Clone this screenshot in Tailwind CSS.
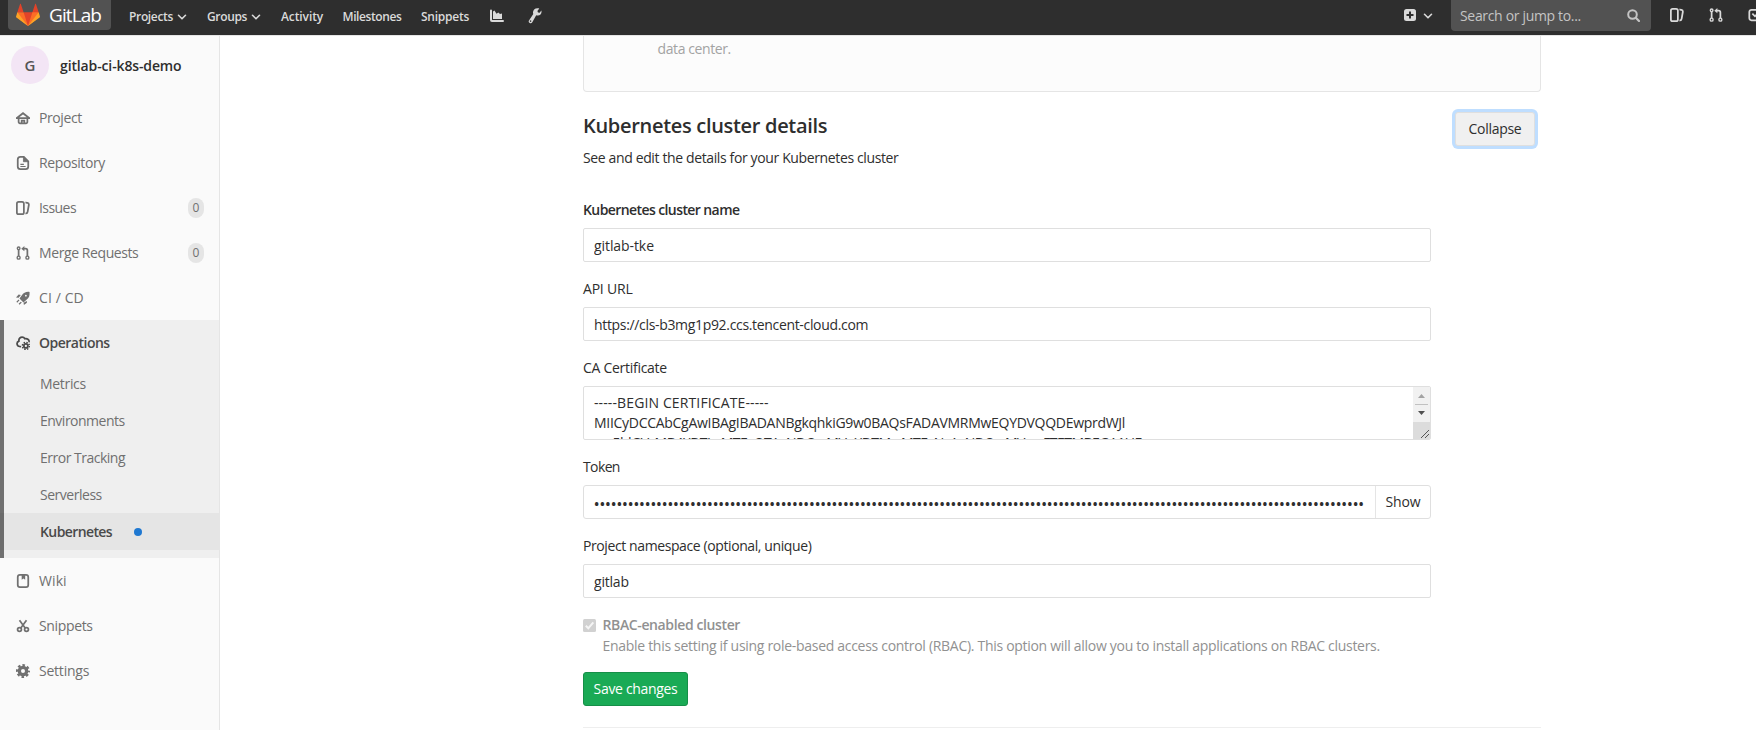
<!DOCTYPE html>
<html lang="en">
<head>
<meta charset="utf-8">
<title>Kubernetes cluster · gitlab-ci-k8s-demo · GitLab</title>
<script src="https://cdn.jsdelivr.net/npm/@tailwindcss/browser@4"></script>
</head>
<body class="flex h-[730px] w-[1756px] flex-col overflow-hidden bg-white font-['Open_Sans','Noto_Sans',sans-serif] text-sm leading-5 text-[#2e2e2e]">

<svg class="hidden">
  <symbol id="i-issues" viewBox="0 0 16 16"><path d="M10.458 15.012l.311.055a3 3 0 0 0 3.476-2.433l1.389-7.879A3 3 0 0 0 13.2 1.28L11.23.933a3.002 3.002 0 0 0-.824-.031c.364.59.58 1.28.593 2.02l1.854.328a1 1 0 0 1 .811 1.158l-1.389 7.879a1 1 0 0 1-1.158.81l-.118-.02a3.98 3.98 0 0 1-.541 1.935zM3 0h4a3 3 0 0 1 3 3v10a3 3 0 0 1-3 3H3a3 3 0 0 1-3-3V3a3 3 0 0 1 3-3zm0 2a1 1 0 0 0-1 1v10a1 1 0 0 0 1 1h4a1 1 0 0 0 1-1V3a1 1 0 0 0-1-1H3z"/></symbol>
  <symbol id="i-merge" viewBox="0 0 16 16"><g fill="none" stroke="currentColor"><g stroke-width="1.6"><circle cx="3" cy="2.7" r="1.5"/><circle cx="3" cy="13.3" r="1.7"/><circle cx="13" cy="13.3" r="1.7"/></g><path stroke-width="2" d="M3 4.5v7M13 11.5V5a2 2 0 0 0-2-2H8.5"/></g><path d="M9.6 0v6L6 3z"/></symbol>
  <symbol id="i-caret" viewBox="0 0 10 10"><path d="M1.500 3.300L5 6.800l3.500-3.500" fill="none" stroke="currentColor" stroke-width="1.6" stroke-linecap="round" stroke-linejoin="round"/></symbol>
</svg>

<header class="flex h-[35px] shrink-0 overflow-hidden bg-[#2e2e2e] text-[#dadada]">
  <a class="ml-2 flex h-[30px] w-[103px] shrink-0 items-center rounded-b bg-[#525252] pl-2 text-white">
    <svg class="h-6 w-6" viewBox="0 0 36 36"><path fill="#e24329" d="M2 14l9.38 9v-9l-4-12.28c-.205-.632-1.176-.632-1.38 0zM34 14l-9.38 9v-9l4-12.28c.205-.632 1.176-.632 1.38 0zM18 34.38L3 14h30z"/><path fill="#fc6d26" d="M18 34.38L11.38 14H2l4 11zM18 34.38L24.62 14H34l-4 11z"/><path fill="#fca326" d="M2 14L.1 20.16c-.18.565 0 1.2.5 1.56L18 34.38zM34 14l1.9 6.16c.18.565 0 1.2-.5 1.56L18 34.38z"/></svg>
    <span class="ml-[9px] text-[19px] tracking-[-0.91px]">GitLab</span>
  </a>
  <nav class="flex h-[33px] items-center text-xs font-semibold">
    <a class="ml-[18px] flex w-[78px] items-center"><span class="w-12 tracking-[-0.34px]">Projects</span><svg class="h-[10px] w-[10px]"><use href="#i-caret"/></svg></a>
    <a class="flex w-[74px] items-center"><span class="w-11 tracking-[-0.36px]">Groups</span><svg class="h-[10px] w-[10px]"><use href="#i-caret"/></svg></a>
    <a class="w-[61.5px] tracking-[-0.1px]">Activity</a>
    <a class="w-[78.5px] tracking-[-0.4px]">Milestones</a>
    <a class="w-[68.5px] tracking-[-0.25px]">Snippets</a>
    <svg class="-mt-0.5 h-[14px] w-[14px]" fill="currentColor" viewBox="0 0 14 14"><path d="M0 1.500a1 1 0 0 1 2 0V10.500q0 .5.5.5H13a1 1 0 0 1 0 2H2a2 2 0 0 1-2-2zM3 2.500l1.500-1L6.500 4.800 8.300 3.600l1.700 1.500L12 4.500V10H3z"/></svg>
    <svg class="-mt-0.5 ml-6 h-4 w-[14px]" fill="currentColor" viewBox="0 0 14 16"><path d="M11.300.4L9.400 3l.6 1.600 1.700.2 1.600-2.400c.9 2.700-.8 5.200-3.400 5.200-.7 0-1.200-.1-1.700-.3L4.300 14.300A1.900 1.900 0 1 1 1 12.400L5.300 6C4 3.200 6.500-.8 11.300.4zM3.300 12.700a.8.8 0 1 0-1.300.9.8.8 0 0 0 1.300-.9z"/></svg>
  </nav>
  <div class="ml-auto flex h-8 w-[352px] shrink-0 items-center">
    <svg class="-mt-0.5 h-3 w-3 shrink-0" viewBox="0 0 12 12"><rect width="12" height="12" rx="2.500" fill="currentColor"/><path d="M6 2.500v7M2.500 6h7" stroke="#2e2e2e" stroke-width="2"/></svg>
    <svg class="ml-[7px] h-[10px] w-[10px] shrink-0"><use href="#i-caret"/></svg>
    <div class="ml-[18px] flex h-[31px] w-[200px] shrink-0 items-center self-start rounded-b bg-[#525252] pl-[9px] text-[#c4c4c4]">
      <span class="w-[167px] tracking-[-0.33px]">Search or jump to...</span>
      <svg class="h-[13px] w-[13px]" viewBox="0 0 13 13" fill="none" stroke="currentColor"><circle cx="5.500" cy="5.500" r="4.300" stroke-width="2"/><path d="M9 9l3 3" stroke-width="2.200" stroke-linecap="round"/></svg>
    </div>
    <svg class="-mt-0.5 ml-[19px] h-[14px] w-[14px] shrink-0" fill="currentColor"><use href="#i-issues"/></svg>
    <svg class="-mt-0.5 ml-[25px] h-[14px] w-[14px] shrink-0" fill="currentColor"><use href="#i-merge"/></svg>
    <svg class="-mt-0.5 ml-[25px] h-[14px] w-[14px] shrink-0" fill="none" stroke="currentColor" stroke-width="2" viewBox="0 0 16 16"><path d="M10 2H4a2.500 2.500 0 0 0-2.500 2.500v7A2.500 2.500 0 0 0 4 14h7a2.500 2.500 0 0 0 2.500-2.500V9M5 6.500l3 3 6-6"/></svg>
  </div>
</header>

<div class="flex min-h-0 flex-1">
  <aside class="w-[220px] shrink-0 border-r border-t border-[#e5e5e5] bg-[#fafafa] text-[#707070]">
    <a class="flex h-[59px] items-center pb-px pl-[11px] font-semibold text-[#2e2e2e]">
      <span class="flex h-[38px] w-[38px] items-center justify-center rounded-full bg-[#f3e5f5] text-[15px] text-[#555]">G</span>
      <span class="ml-[11px] mt-px tracking-[-0.13px]">gitlab-ci-k8s-demo</span>
    </a>
    <a class="flex h-[45px] items-center pl-4"><svg class="mr-[9px] h-[14px] w-[14px]" fill="none" stroke="currentColor" stroke-width="2" viewBox="0 0 16 16"><path d="M1 8l7-5.500L15 8M0 8h16M3 8v4.500A1.500 1.500 0 0 0 4.500 14h7a1.500 1.500 0 0 0 1.500-1.500V8"/><path d="M6.500 14v-3h3v3"/></svg><span class="tracking-[-0.4px]">Project</span></a>
    <a class="flex h-[45px] items-center pl-4"><svg class="mr-[9px] h-[14px] w-[14px]" fill="none" stroke="currentColor" stroke-width="2" viewBox="0 0 16 16"><path d="M9 1H5a3 3 0 0 0-3 3v8a3 3 0 0 0 3 3h6a3 3 0 0 0 3-3V6z"/><path d="M8.500 1v5.500H14L9 1z" fill="currentColor" stroke-width="1"/><path d="M5 9.500h4M5 12h6" stroke-width="1.300"/></svg><span class="tracking-[-0.39px]">Repository</span></a>
    <a class="flex h-[45px] items-center pl-4 pr-[15px]"><svg class="mr-[9px] h-[14px] w-[14px]" fill="currentColor"><use href="#i-issues"/></svg><span class="tracking-[-0.56px]">Issues</span><span class="ml-auto flex h-5 w-4 items-center justify-center rounded-full bg-[#e5e5e5] text-xs">0</span></a>
    <a class="flex h-[45px] items-center pl-4 pr-[15px]"><svg class="mr-[9px] h-[14px] w-[14px]" fill="currentColor"><use href="#i-merge"/></svg><span class="tracking-[-0.41px]">Merge Requests</span><span class="ml-auto flex h-5 w-4 items-center justify-center rounded-full bg-[#e5e5e5] text-xs">0</span></a>
    <a class="flex h-[45px] items-center pl-4"><svg class="mr-[9px] h-[14px] w-[14px]" fill="currentColor" viewBox="0 0 16 16"><path fill-rule="evenodd" d="M15.500 1c.3 4.300-.6 6.800-3.500 9l-3.500 3L4 8.500 6.500 5C8.700 2 11.500.5 15.500 1zM11.300 4.300a1 1 0 1 0 0 2 1 1 0 0 0 0-2z"/><path d="M5.500 4.500L3 4 0 7.500l3 .3zM12.300 11.500l.2 2-3.500 2.500-.3-2.500zM3 9.700l-2.600 2.600 1 1L4 10.700zM5.500 12.200L3 14.700l1 1 2.600-2.500z"/></svg><span class="tracking-[0.1px]">CI / CD</span></a>
    <div class="h-[238px] border-l-4 border-[#707070] bg-[#efefef]">
      <a class="flex h-[45px] items-center pl-3 font-semibold text-[#4a4a4a]"><svg class="mr-[9px] h-[14px] w-[14px]" fill="none" stroke="currentColor" viewBox="0 0 16 16"><path stroke-width="2" stroke-linecap="round" d="M5 12H4.300a3.200 3.200 0 0 1-1-6.200C3 3 5 1.200 7 1.200c1.500 0 2.500.7 3.200 1.900C12.800 2.500 15 4 15 6.300"/><circle cx="11.300" cy="11.300" r="2.300" stroke-width="2"/><circle cx="11.300" cy="11.300" r="4" stroke-width="1.700" stroke-dasharray="1.700 1.442"/></svg><span class="tracking-[-0.5px]">Operations</span></a>
      <a class="flex h-[37px] items-center pl-[36px] tracking-[-0.32px]">Metrics</a>
      <a class="flex h-[37px] items-center pl-[36px] tracking-[-0.5px]">Environments</a>
      <a class="flex h-[37px] items-center pl-[36px] tracking-[-0.5px]">Error Tracking</a>
      <a class="flex h-[37px] items-center pl-[36px] tracking-[-0.48px]">Serverless</a>
      <a class="-ml-1 flex h-[37px] items-center bg-black/4 pl-10 font-semibold text-[#4a4a4a]"><span class="w-[94px] tracking-[-0.6px]">Kubernetes</span><span class="h-2 w-2 rounded-full bg-[#1f78d1]"></span></a>
    </div>
    <a class="flex h-[45px] items-center pl-4"><svg class="mr-[9px] h-[14px] w-[14px]" fill="none" stroke="currentColor" stroke-width="2" viewBox="0 0 16 16"><rect x="2" y="1" width="12" height="14" rx="2.500"/><path d="M6.500 1h4v5.500L8.500 5l-2 1.500z" fill="currentColor" stroke="none"/></svg><span class="tracking-[0.1px]">Wiki</span></a>
    <a class="flex h-[45px] items-center pl-4"><svg class="mr-[9px] h-[14px] w-[14px]" fill="none" stroke="currentColor" viewBox="0 0 16 16"><circle cx="4" cy="12" r="2.200" stroke-width="2"/><circle cx="12" cy="12" r="2.200" stroke-width="2"/><path stroke-width="2" d="M4 1.500l6.700 9M12 1.500l-6.700 9"/></svg><span class="tracking-[-0.35px]">Snippets</span></a>
    <a class="flex h-[45px] items-center pl-4"><svg class="mr-[9px] h-[14px] w-[14px]" fill="none" stroke="currentColor" viewBox="0 0 16 16"><circle cx="8" cy="8" r="4.200" stroke-width="3.800"/><circle cx="8" cy="8" r="6.700" stroke-width="2.600" stroke-dasharray="2.900 2.362" stroke-dashoffset="1.450"/></svg><span class="tracking-[-0.22px]">Settings</span></a>
  </aside>

  <main class="min-w-0 flex-1 border-t border-[#e5e5e5] pl-[363px]">
    <div class="w-[958px]">
      <div class="h-14 rounded-b border border-t-0 border-[#e5e5e5] bg-[#fcfcfc] pl-[73.500px] pt-[3px] tracking-[-0.4px] text-[#a3a3a3]">data center.</div>
      <div class="flex items-start justify-between pr-1.5 pt-5">
        <div>
          <h4 class="pt-px text-xl leading-[26px] font-semibold tracking-[-0.31px]">Kubernetes cluster details</h4>
          <p class="pt-[9px] tracking-[-0.37px]">See and edit the details for your Kubernetes cluster</p>
        </div>
        <button class="h-[34px] w-20 rounded-[3px] border border-[#dfdfdf] bg-[#f0f0f0] tracking-[-0.3px] ring-3 ring-[#bfdeff]">Collapse</button>
      </div>
      <form class="w-[848px] pt-8">
        <label class="block h-[28px] font-semibold tracking-[-0.59px]">Kubernetes cluster name</label>
        <input class="block h-[34px] w-full rounded-xs border border-[#dfdfdf] px-2.5 pt-px tracking-[-0.08px]" value="gitlab-tke">
        <label class="mt-[17px] block h-[28px] tracking-[-0.2px]">API URL</label>
        <input class="block h-[34px] w-full rounded-xs border border-[#dfdfdf] px-2.5 pt-px tracking-[-0.33px]" value="https://cls-b3mg1p92.ccs.tencent-cloud.com">
        <label class="mt-[17px] block h-[28px] tracking-[-0.28px]">CA Certificate</label>
        <div class="flex h-[54px] overflow-hidden rounded-xs border border-[#dfdfdf]">
          <div class="flex-1 px-2.5 pt-1.5 whitespace-nowrap">
            <p class="tracking-[0.12px]">-----BEGIN CERTIFICATE-----</p>
            <p class="tracking-[-0.29px]">MIICyDCCAbCgAwIBAgIBADANBgkqhkiG9w0BAQsFADAVMRMwEQYDVQQDEwprdWJl</p>
            <p class="tracking-[-0.53px]">cm5ldGVzMB4XDTIwMTEyOTAyNDQwMVoXDTMwMTEyNzAyNDQwMVowFTETMBEGA1UE</p>
          </div>
          <svg class="h-[52px] w-[17px]" viewBox="0 0 17 52"><path fill="#f1f1f1" d="M0 0h17v35H0z"/><path fill="#dcdcdc" d="M0 35h17v17H0z"/><path fill="#a3a3a3" d="M5 11l3.500-4 3.500 4z"/><path fill="#c1c1c1" d="M2 17h13v1H2z"/><path fill="#505050" d="M5 24h7l-3.500 4z"/><path stroke="#555" d="M8 51l8-8M12 51l4-4" fill="none"/></svg>
        </div>
        <label class="mt-[17px] block h-[28px] tracking-[-0.62px]">Token</label>
        <div class="flex h-[34px] rounded-[3px] border border-[#dfdfdf]">
          <div class="w-[791px] shrink-0 px-2.5"><div class="w-[771px] overflow-hidden pt-2 font-semibold tracking-[0.4px] whitespace-nowrap">••••••••••••••••••••••••••••••••••••••••••••••••••••••••••••••••••••••••••••••••••••••••••••••••••••••••••••••••••••••••••••••••••••••••</div></div>
          <button type="button" class="flex-1 border-l border-[#e5e5e5] tracking-[-0.17px]">Show</button>
        </div>
        <label class="mt-[17px] block h-[28px] tracking-[-0.4px]">Project namespace (optional, unique)</label>
        <input class="block h-[34px] w-full rounded-xs border border-[#dfdfdf] px-2.5 pt-px tracking-[-0.2px]" value="gitlab">
        <div class="mt-[17px] flex text-[#919191]">
          <svg class="mt-1 mr-1.5 h-[13px] w-[13px]" viewBox="0 0 13 13"><rect width="13" height="13" rx="1.500" fill="#d1d1d1"/><path d="M2.800 6.800l2.500 2.500 5-6" fill="none" stroke="#f5f5f5" stroke-width="2"/></svg>
          <div class="pl-[0.5px] whitespace-nowrap"><p class="font-semibold tracking-[-0.38px]">RBAC-enabled cluster</p><p class="pt-px tracking-[-0.296px]">Enable this setting if using role-based access control (RBAC). This option will allow you to install applications on RBAC clusters.</p></div>
        </div>
        <button type="button" class="mt-4 block h-[34px] w-[105px] rounded-[3px] border border-[#168f48] bg-[#1aaa55] tracking-[-0.33px] text-white">Save changes</button>
      </form>
      <hr class="mt-[21px] border-[#eee]">
    </div>
  </main>
</div>
</body>
</html>
